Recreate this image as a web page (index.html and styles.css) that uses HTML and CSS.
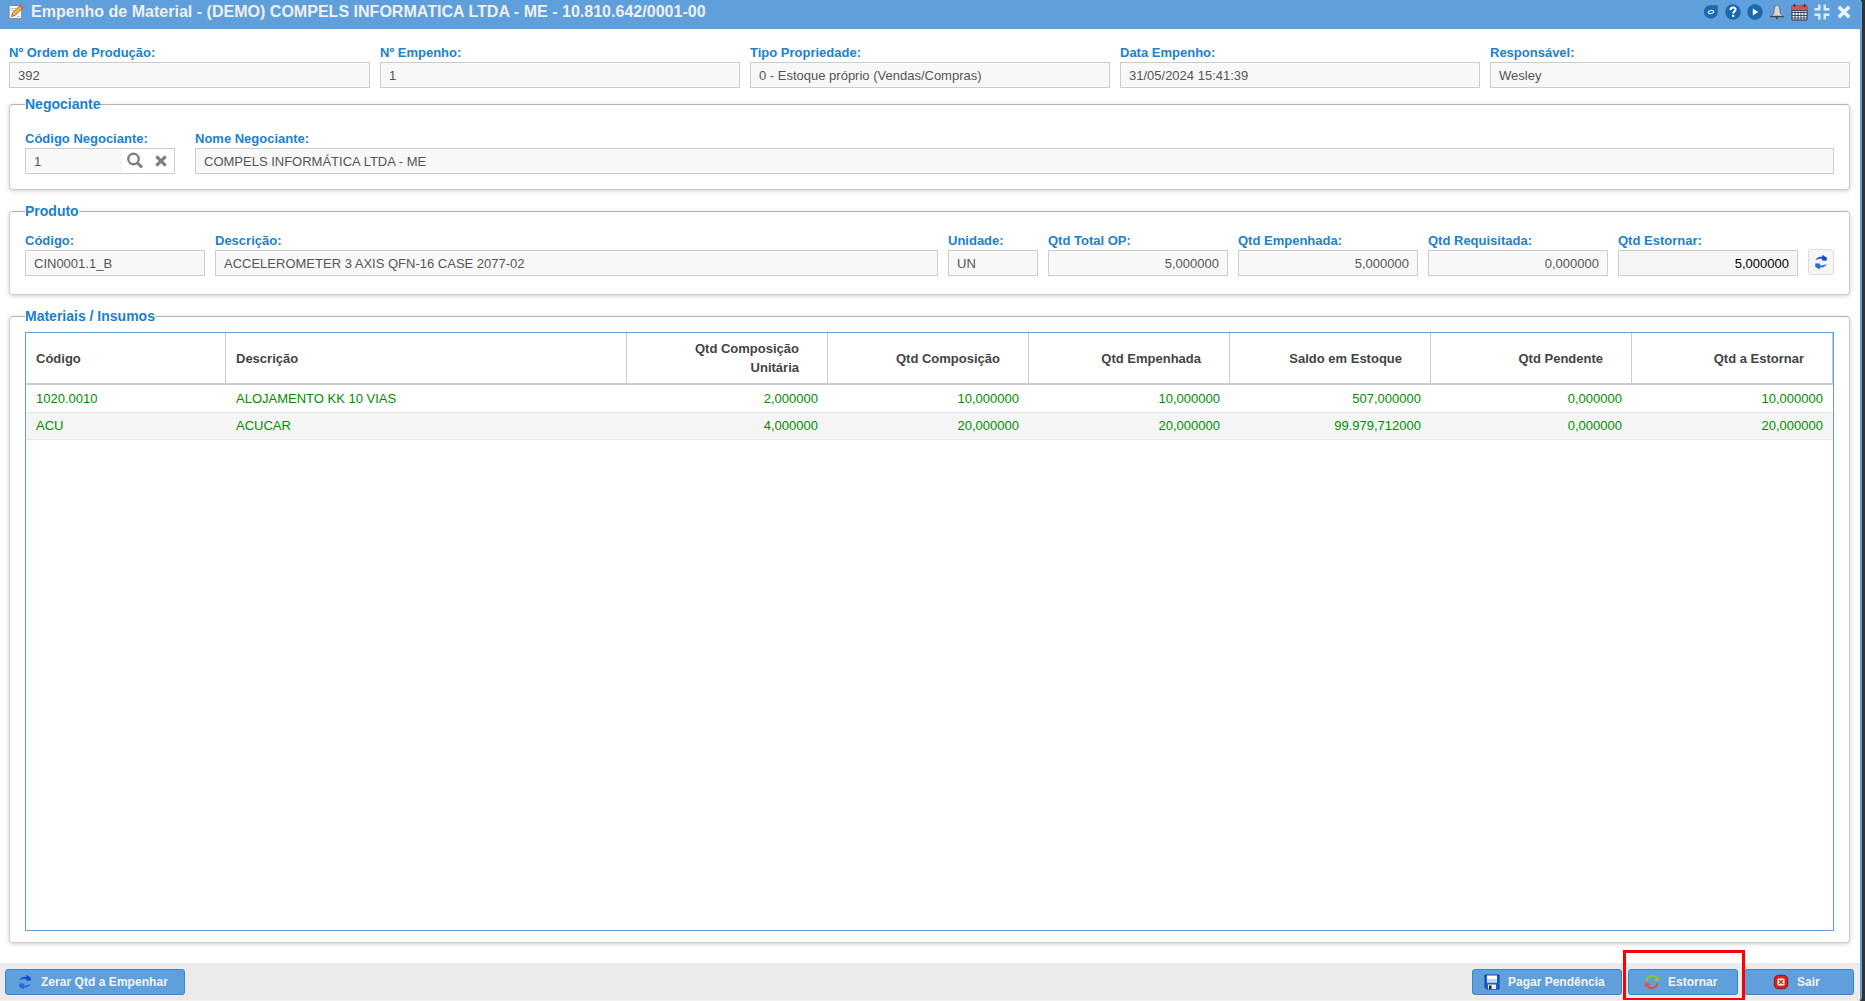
FILE: index.html
```html
<!DOCTYPE html>
<html lang="pt-BR">
<head>
    <meta charset="UTF-8">
    <meta name="viewport" content="width=device-width, initial-scale=1.0">
    <title>Empenho de Material</title>
    <link rel="stylesheet" href="styles.css">
</head>
<body>
    <!-- shared icons -->
    <svg width="0" height="0" class="sprite">
        <symbol id="refresh" viewBox="0 0 16 16">
            <path fill="#1747d6" d="M2.500 6.500C3.500 3.500 6 2.300 9.300 2.800L9.300.8 14 3.800 13.500 6.800 8.500 6.500 9.500 5C7 4.500 4.500 5 2.500 6.500Z"/>
            <path fill="#2468e2" d="M13.500 10C12.500 12.700 10 13.900 6.700 13.400L6.700 15.400 2 12.400 2.500 9.300 7.500 9.700 6.500 11.200C9 11.700 11.500 11.200 13.500 10Z"/>
        </symbol>
    </svg>

    <div class="window">
        <header class="titlebar">
            <svg class="title-icon" width="16" height="16" viewBox="0 0 16 16">
                <path fill="#fff" stroke="#777d86" stroke-width=".8" d="M1.200 1.500h12.300v13H1.200z"/>
                <path stroke="#b9bec6" d="M3 4.500h5M3 6.500h3M9 12.500h3"/>
                <path fill="#f6b73c" stroke="#7a4b12" stroke-width=".8" d="M3.500 12.500 4.500 9 11.500 2 14 4.500 7 11.500Z"/>
                <path fill="#e0624a" d="M11.500 1.800 13 .5 15.500 3 14.200 4.500Z"/>
            </svg>
            <h1>Empenho de Material - (DEMO) COMPELS INFORMATICA LTDA - ME - 10.810.642/0001-00</h1>
            <div class="tools">
                <svg width="16" height="16" viewBox="0 0 16 16">
                    <path fill="#1a69ad" d="M7 1.200H14.700V7.500C14.700 11.500 12 14.500 8 14.500S1 12 1 8 3.500 1.200 7 1.200Z"/>
                    <ellipse cx="8" cy="8" rx="2.700" ry="1.500" fill="none" stroke="#dceafa" stroke-width="1.200" transform="rotate(-12 8 8)"/>
                </svg>
                <svg width="16" height="16" viewBox="0 0 16 16">
                    <circle cx="8" cy="8" r="7.700" fill="#1a69ad"/>
                    <path fill="none" stroke="#fff" stroke-width="2" d="M5.500 6C5.500 2.700 10.600 2.800 10.600 5.600 10.600 7.300 8.200 7.300 8.200 9.600"/>
                    <path fill="#fff" d="M7.100 10.800h2.200v2.200h-2.200z"/>
                </svg>
                <svg width="16" height="16" viewBox="0 0 16 16">
                    <circle cx="8" cy="8" r="7.700" fill="#1a69ad"/>
                    <path fill="#fff" d="M5.800 4.500 11.200 8 5.800 11.500Z"/>
                </svg>
                <svg width="16" height="16" viewBox="0 0 16 16">
                    <path fill="#d5d5d1" stroke="#5b6066" stroke-width=".8" d="M7.300 1.500a.8.8 0 0 1 1.400 0C10.500 2.500 11 4.500 11 7 11 9.500 12 10.500 14 12.200H2C4 10.500 5 9.500 5 7 5 4.500 5.500 2.500 7.300 1.500Z"/>
                    <path fill="#444" d="M1.200 12h13.600v1.200H1.200zM7 13.500h2V15H7z"/>
                </svg>
                <svg width="17" height="17" viewBox="0 0 17 17">
                    <path fill="#fff" stroke="#2b2f45" d="M1 2h15v14H1z"/>
                    <path fill="#e0504c" d="M.5 1.500h16v4.500H.5z"/>
                    <path stroke="#333" stroke-width="1.500" d="M3.500 0v3M13.500 0v3"/>
                    <path stroke="#2f3558" stroke-width=".9" d="M1 6.500h15M1 8.500h15M1 11.500h15M1 14h15M4 7v9M7 7v9M10 7v9M13 7v9"/>
                </svg>
                <svg width="16" height="16" viewBox="0 0 16 16">
                    <path fill="none" stroke="#dfecfa" stroke-width="2.400" d="M.5 5.300h4.800V.5M10.700.5v4.800h4.800M.5 10.700h4.800v4.800M10.700 15.500v-4.800h4.800"/>
                </svg>
                <svg width="16" height="16" viewBox="0 0 16 16">
                    <path stroke="#eaf3fc" stroke-width="3.600" d="M2.800 2.800 13.200 13.200M13.200 2.800 2.800 13.200"/>
                </svg>
            </div>
        </header>

        <main class="content">
            <div class="row order">
                <div class="field grow"><label>Nº Ordem de Produção:</label><div class="box">392</div></div>
                <div class="field grow"><label>Nº Empenho:</label><div class="box">1</div></div>
                <div class="field grow"><label>Tipo Propriedade:</label><div class="box">0 - Estoque próprio (Vendas/Compras)</div></div>
                <div class="field grow"><label>Data Empenho:</label><div class="box">31/05/2024 15:41:39</div></div>
                <div class="field grow"><label>Responsável:</label><div class="box">Wesley</div></div>
            </div>

            <section class="group trader">
                <h2>Negociante</h2>
                <div class="row">
                    <div class="field code">
                        <label>Código Negociante:</label>
                        <div class="box lookup">
                            <span>1</span>
                            <svg width="18" height="18" viewBox="0 0 18 18">
                                <circle cx="7.500" cy="7" r="5.200" fill="none" stroke="#808080" stroke-width="2.400"/>
                                <path stroke="#808080" stroke-width="3" d="M11.300 10.800 16 15.500"/>
                            </svg>
                            <svg class="clear" width="12" height="12" viewBox="0 0 12 12">
                                <path stroke="#808080" stroke-width="3.200" d="M1.300 1.300 10.700 10.700M10.700 1.300 1.300 10.700"/>
                            </svg>
                        </div>
                    </div>
                    <div class="field grow"><label>Nome Negociante:</label><div class="box">COMPELS INFORMÁTICA LTDA - ME</div></div>
                </div>
            </section>

            <section class="group product">
                <h2>Produto</h2>
                <div class="row">
                    <div class="field qty"><label>Código:</label><div class="box">CIN0001.1_B</div></div>
                    <div class="field grow"><label>Descrição:</label><div class="box">ACCELEROMETER 3 AXIS QFN-16 CASE 2077-02</div></div>
                    <div class="field unit"><label>Unidade:</label><div class="box">UN</div></div>
                    <div class="field qty"><label>Qtd Total OP:</label><div class="box number">5,000000</div></div>
                    <div class="field qty"><label>Qtd Empenhada:</label><div class="box number">5,000000</div></div>
                    <div class="field qty"><label>Qtd Requisitada:</label><div class="box number">0,000000</div></div>
                    <div class="field qty"><label>Qtd Estornar:</label><div class="box number active">5,000000</div></div>
                    <button class="reload"><svg width="16" height="16"><use href="#refresh"/></svg></button>
                </div>
            </section>

            <section class="group materials">
                <h2>Materiais / Insumos</h2>
                <div class="grid">
                    <table>
                        <colgroup>
                            <col class="col-code"><col class="col-desc"><col><col><col><col><col><col>
                        </colgroup>
                        <thead>
                            <tr>
                                <th>Código</th>
                                <th>Descrição</th>
                                <th>Qtd Composição Unitária</th>
                                <th>Qtd Composição</th>
                                <th>Qtd Empenhada</th>
                                <th>Saldo em Estoque</th>
                                <th>Qtd Pendente</th>
                                <th>Qtd a Estornar</th>
                            </tr>
                        </thead>
                        <tbody>
                            <tr>
                                <td>1020.0010</td>
                                <td>ALOJAMENTO KK 10 VIAS</td>
                                <td>2,000000</td>
                                <td>10,000000</td>
                                <td>10,000000</td>
                                <td>507,000000</td>
                                <td>0,000000</td>
                                <td>10,000000</td>
                            </tr>
                            <tr>
                                <td>ACU</td>
                                <td>ACUCAR</td>
                                <td>4,000000</td>
                                <td>20,000000</td>
                                <td>20,000000</td>
                                <td>99.979,712000</td>
                                <td>0,000000</td>
                                <td>20,000000</td>
                            </tr>
                        </tbody>
                    </table>
                </div>
            </section>
        </main>

        <footer class="actions">
            <button class="btn reset">
                <svg width="16" height="16"><use href="#refresh"/></svg>
                Zerar Qtd a Empenhar
            </button>
            <button class="btn pay">
                <svg width="16" height="16" viewBox="0 0 16 16">
                    <path fill="#1d5fd0" stroke="#123f91" d="M1 1h14v14H2.500L1 13.500Z"/>
                    <path fill="#fff" d="M3 1.500h10v7H3z"/>
                    <path fill="#c5d4ea" d="M3 5h10v3.500H3z"/>
                    <path fill="#e8edf5" d="M4 10.500h8V15H4z"/>
                    <path fill="#222" d="M5 11.500h2.500V15H5z"/>
                </svg>
                Pagar Pendência
            </button>
            <button class="btn reverse">
                <svg width="16" height="16" viewBox="0 0 16 16">
                    <path fill="none" stroke="#8ccb1c" stroke-width="2" d="M3 7C3 2 9 0 12.500 4"/>
                    <path fill="#8ccb1c" d="M15.500 2.500 14.500 7.500 9.500 6Z"/>
                    <path fill="none" stroke="#ee4a35" stroke-width="2" d="M13 9C13 14 7 16 3.500 12"/>
                    <path fill="#ee4a35" d="M.5 13.500 1.500 8.500 6.500 10Z"/>
                </svg>
                Estornar
            </button>
            <button class="btn exit">
                <svg width="16" height="16" viewBox="0 0 16 16">
                    <path fill="#d3231b" stroke="#98120d" d="M5.500 1.300h5C13 1.300 14.700 3 14.700 5.500v5C14.700 13 13 14.700 10.500 14.700h-5C3 14.700 1.300 13 1.300 10.500v-5C1.300 3 3 1.300 5.500 1.300Z"/>
                    <rect x="4.500" y="4.500" width="7" height="7" rx="1" fill="#fff"/>
                    <path stroke="#d3231b" stroke-width="1.500" d="M6 6 10 10M10 6 6 10"/>
                </svg>
                Sair
            </button>
            <div class="highlight"></div>
        </footer>
    </div>
</body>
</html>
```
FILE: styles.css
```css
* {
    box-sizing: border-box;
}
body {
    margin: 0;
    height: 1001px;
    overflow: hidden;
    background: #333;
    font-family: "Liberation Sans", Arial, sans-serif;
    font-size: 13px;
}
.sprite {
    position: absolute;
}
.window {
    display: flex;
    flex-direction: column;
    width: 1862px;
    height: 1001px;
    background: #fff;
    border-right: 2px solid #5f9fdc;
    border-bottom: 1px solid #f4f2ee;
    border-radius: 0 3px 4px 0;
    overflow: hidden;
}
.titlebar {
    display: flex;
    height: 29px;
    padding: 3px 6px 0 8px;
    background: #5f9fdc;
}
h1 {
    margin: 0 0 0 7px;
    color: #f0f0f0;
    font-size: 16px;
    line-height: 17px;
    letter-spacing: 0.02px;
}
.title-icon {
    margin-top: 1px;
}
.tools {
    display: flex;
    gap: 6px;
    margin: 1px 2px 0 auto;
}
.content {
    flex: 1;
    display: flex;
    flex-direction: column;
    padding: 15px 10px 20px 9px;
}
.row {
    display: flex;
    gap: 10px;
}
.field.grow {
    flex: 1;
}
.order .field:first-child {
    flex: 0 0 361px;
}
label {
    display: block;
    height: 18px;
    color: #2081cf;
    font-weight: bold;
    line-height: 18px;
}
.box {
    height: 26px;
    padding: 0 8px;
    border: 1px solid #ccc;
    background: #f8f8f8;
    color: #555;
    line-height: 25px;
}
.number {
    text-align: right;
}
.active {
    background: #f5f5f5;
    color: #000;
}
.group {
    padding: 0 15px;
    border: 1px solid #ccc;
    border-top-color: #b5b5b5;
    border-radius: 4px;
    box-shadow: 0 1px 4px rgba(0, 0, 0, 0.2);
}
h2 {
    width: max-content;
    margin: -9px 0 0;
    background: #fff;
    color: #1a80cf;
    font-size: 14px;
    line-height: 16px;
}
.trader {
    height: 86px;
    margin-top: 16px;
}
.trader .row {
    gap: 20px;
    margin-top: 18px;
}
.code {
    width: 150px;
}
.lookup {
    display: flex;
    align-items: center;
    padding: 0 7px 0 0;
    background: #fff;
}
.lookup span {
    width: 96px;
    height: 24px;
    margin-right: 4px;
    padding-left: 8px;
    background: #f8f8f8;
}
.clear {
    margin-left: 11px;
}
.product {
    height: 84px;
    margin-top: 21px;
}
.product .row {
    margin-top: 13px;
}
.qty {
    width: 180px;
}
.unit {
    width: 90px;
}
.reload {
    width: 26px;
    height: 26px;
    margin-top: 17px;
    padding: 4px;
    border: 1px solid #ddd;
    border-radius: 3px;
    background: #f6f6f6;
}
.materials {
    flex: 1;
    display: flex;
    flex-direction: column;
    margin-top: 21px;
    padding-bottom: 11px;
}
.grid {
    flex: 1;
    margin-top: 8px;
    border: 1px solid #5f9fdc;
}
table {
    width: 1807px;
    table-layout: fixed;
    border-collapse: separate;
    border-spacing: 0;
}
col {
    width: 201px;
}
.col-code {
    width: 200px;
}
.col-desc {
    width: 401px;
}
th {
    height: 52px;
    padding: 0 28px 0 50px;
    border-right: 1px solid #ccc;
    border-bottom: 2px solid #ccc;
    color: #444;
    line-height: 19px;
    text-align: right;
}
td {
    height: 27px;
    padding: 0 10px 1px;
    border-bottom: 1px solid #e6e6e6;
    color: #008e00;
    text-align: right;
}
tbody tr:first-child td {
    height: 28px;
}
th:nth-child(-n+2),
td:nth-child(-n+2) {
    padding-left: 10px;
    text-align: left;
}
tbody tr:nth-child(even) {
    background: #f5f5f5;
}
.actions {
    display: flex;
    gap: 6px;
    position: relative;
    height: 37px;
    padding: 6px 6px 0 5px;
    background: #ebebeb;
}
.btn {
    display: flex;
    align-items: center;
    width: 110px;
    height: 26px;
    padding: 0 0 1px 15px;
    border: 1px solid #3a87cd;
    border-radius: 3px;
    background: #5f9fdc;
    color: #f4f6f8;
    font: bold 12px "Liberation Sans", Arial, sans-serif;
}
.btn svg {
    margin-right: 8px;
}
.reset {
    width: 180px;
    margin-right: auto;
    padding-left: 11px;
    letter-spacing: 0.04px;
}
.pay {
    width: 150px;
    padding-left: 11px;
}
.exit {
    padding-left: 28px;
}
/* red frame around the Estornar button */
.highlight {
    position: absolute;
    top: -13px;
    left: 1623px;
    width: 122px;
    height: 51px;
    border: 3px solid #fe0000;
}
```
